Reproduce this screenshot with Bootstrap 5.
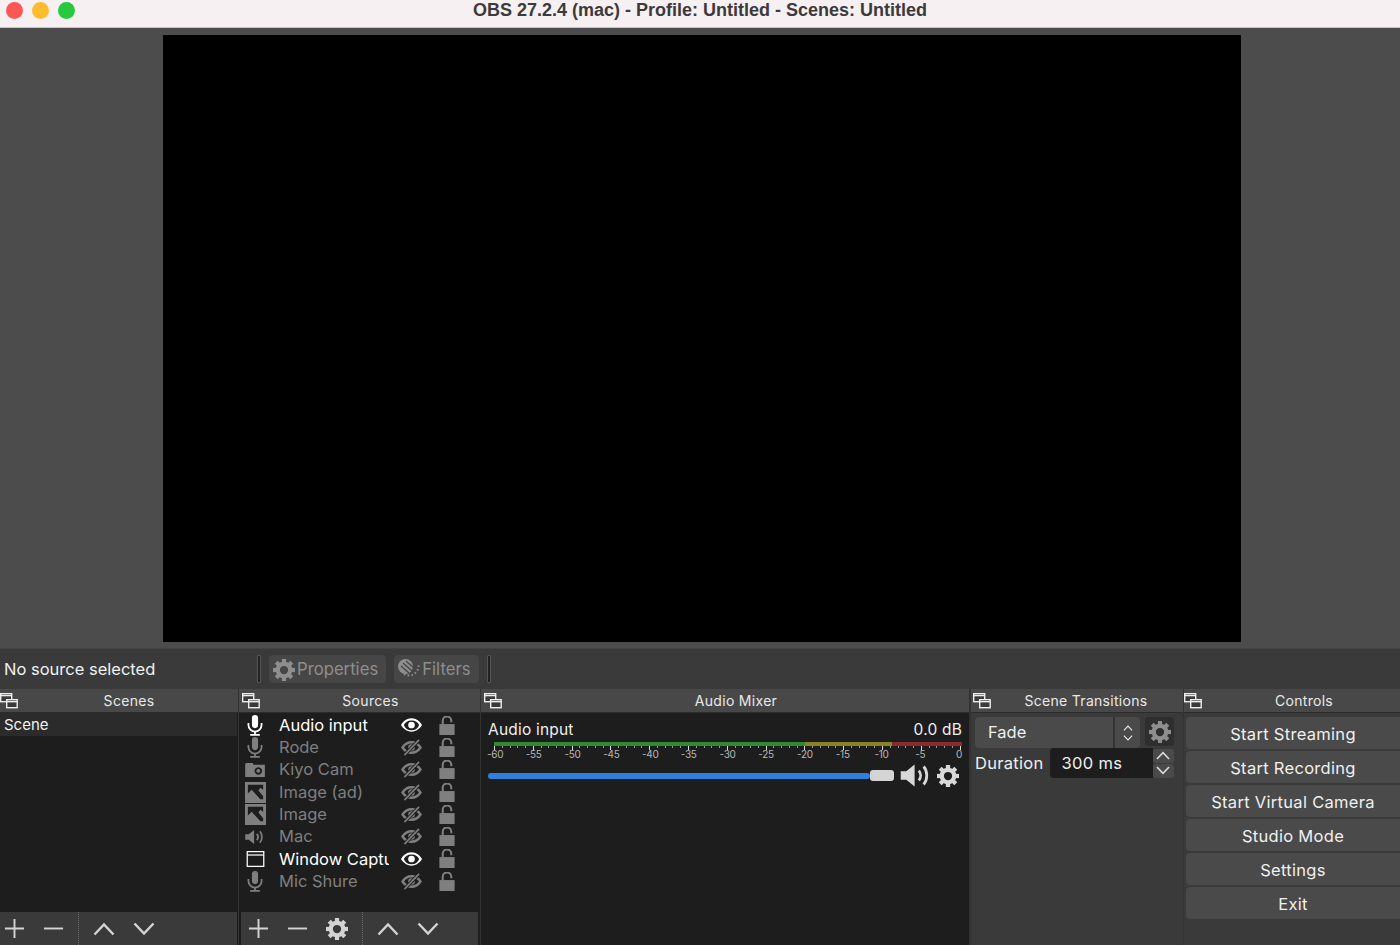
<!DOCTYPE html>
<html lang="en">
<head>
<meta charset="UTF-8">
<title>OBS 27.2.4 (mac)</title>
<link href="https://cdn.jsdelivr.net/npm/bootstrap@5.3.0/dist/css/bootstrap.min.css" rel="stylesheet">
<style>
html, body { height: 945px; overflow: hidden; }
body { background: #3a3a3a; color: #f0f0f0; font-family: Inter, "Liberation Sans", sans-serif; font-size: 16px; width: 1400px; }
svg { display: block; flex: none; }

.titlebar { height: 28px; background: #f6f0f3; border-bottom: 1px solid #c9c5c7; position: relative; }
.titlebar .title { color: #3c3a3b; font-family: "Liberation Sans", sans-serif; font-size: 18px; font-weight: 700; line-height: 20px; }
.light { width: 17px; height: 17px; border-radius: 50%; }
.light-red { background: #fc5753; }
.light-yellow { background: #fdbc2e; }
.light-green { background: #28c83f; }
.lights { left: 6px; top: 2px; gap: 9px; position: absolute; }
.preview { height: 620px; background: #4c4c4c; padding: 7px 159px 6px 163px; }
.preview div { height: 100%; background: #000; }

.context { height: 41px; background: #3a3a3a; padding-left: 4px; border-top: 1px solid #434343; }
.context .label { width: 253px; font-size: 16.5px; }
.sep { width: 4px; height: 28px; background: #222; border: 1px solid #555; border-radius: 1px; }
.ctx-btn { height: 28px; background: #464646; border-radius: 4px; color: #8e8e8e; font-size: 16.7px; padding: 1px 8px 0 4px; gap: 2px; }

.docks { height: 256px; gap: 1px; background: #333; }
.dock { display: flex; flex-direction: column; background: #3a3a3a; }
.dock-scenes { width: 238px; background: #1d1d1d; }
.dock-sources { width: 241px; background: #1d1d1d; }
.dock-mixer { width: 488px; background: #1d1d1d; }
.dock-trans { width: 212px; margin-left: 1px; }
.dock-controls { flex: 1; }
.dock-title { height: 24px; background: #484848; border-bottom: 1px solid #2b2b2b; position: relative; font-size: 14px; letter-spacing: .3px; color: #e8e8e8; text-align: center; line-height: 24px; padding-left: 20px; flex: none; }
.dock-title svg { position: absolute; left: 0; top: 2px; }
.dock-sources .dock-title, .dock-mixer .dock-title { padding-left: 22px; }
.dock-controls .dock-title { padding-left: 24px; }
.dock-trans .dock-title { padding-left: 18px; }
.dock-sources .dock-title svg, .dock-mixer .dock-title svg { left: 3px; }
.dock-trans .dock-title svg { left: 2px; }
.dock-body { flex: 1; background: #1d1d1d; min-height: 0; }
.toolbar { height: 33px; background: #3a3a3a; flex: none; color: #d4d4d4; }
.dock-scenes .toolbar { padding-left: 4px; margin-right: 1px; }
.dock-sources .toolbar { padding-left: 7px; margin: 0 2px; }
.tool-gap { margin-right: 18px; }
.toolbar .dots { height: 33px; border-left: 1px dotted #6a6a6a; margin: 0 14px; }
.scene-row { height: 23px; background: #2b2b2b; padding-left: 4px; margin-right: 1px; line-height: 23px; font-size: 15px; }

.src-list { padding-top: 1px; }
.src-row { height: 22.3px; padding-left: 5px; font-size: 16.5px; color: #7f7f7f; }
.src-row.on { color: #fff; }
.src-ico { width: 22px; margin-right: 13px; }
.src-name { width: 110px; overflow: hidden; white-space: nowrap; }
.src-eye { margin-left: 12px; margin-right: 17px; }
.src-lock { color: #7f7f7f; }

.mixer { padding: 6px 7px; }
.mixer-head { font-size: 15.5px; line-height: 22px; letter-spacing: .2px; }
.meter { height: 4px; margin-left: 6px; margin-top: 1px; background: linear-gradient(90deg, #2f8a2f 0 66.5%, #8b8226 66.5% 85%, #8a2a2a 85%); }
.ticks { height: 4px; margin-left: 6px; background: repeating-linear-gradient(90deg, #ddd 0 1px, transparent 1px 38.8px), repeating-linear-gradient(90deg, #999 0 1px, transparent 1px 7.76px) 0 0 / 100% 2px no-repeat; }
.scale { margin: -1px -4px 0 -1px; font-size: 10px; color: #b8b8b8; line-height: 11px; letter-spacing: -.3px; }
.scale span { width: 14px; text-align: center; }
.slider-row { margin-top: 3px; }
.track { width: 382px; height: 6px; background: #2f80dc; border-radius: 3px; }
.thumb { width: 24px; height: 11px; background: #d4d4d4; border-radius: 3px; margin-right: 6px; }
.mixer-spk { color: #d8d8d8; margin-right: 5px; }
.mixer-gear { color: #d8d8d8; }

.trans-select { width: 165px; height: 31px; background: #4a4a4a; border-radius: 4px; padding-left: 13px; font-size: 16.5px; }
.trans-select .arrows { margin-left: auto; width: 27px; height: 100%; border-left: 2px solid #333; }
.icon-btn { width: 29px; height: 29px; background: #2e2e2e; border-radius: 4px; color: #8e8e8e; margin-left: 5px; }
.duration { font-size: 16.5px; letter-spacing: .3px; }
.dur-input { width: 103px; height: 30px; background: #1d1d1d; border-radius: 4px 0 0 4px; padding-left: 12px; margin-left: 6px; }
.spin { width: 21px; height: 14px; background: #4a4a4a; color: #ddd; border-radius: 3px; }
.spin-stack { gap: 1px; }

.control-list { gap: 2px; padding-top: 4px; }
.control-btn { height: 32px; width: 214px; background: #4a4a4a; color: #f0f0f0; border: 0; border-radius: 4px 0 0 4px; padding: 2px 0 0; font-size: 16.5px; letter-spacing: .3px; }
.control-btn:hover { background: #4a4a4a; color: #f0f0f0; }
</style>
</head>
<body>

<svg width="0" height="0" class="position-absolute">
  <symbol id="i-dock" viewBox="0 0 18 18"><g fill="#3a3a3a" stroke="#eee" stroke-width="1.4"><rect x=".7" y="2.7" width="11" height="8"/><path d="M1 4.600h10.500"/><rect x="6.700" y="8.700" width="10.500" height="8"/><path d="M7 10.700h10"/></g></symbol>
  <symbol id="i-mic" viewBox="0 0 18 24"><rect x="5.500" y="0" width="7" height="15" rx="3.500" fill="currentColor"/><path d="M1.500 9v2.500a7.500 7.500 0 0 0 15 0V9" fill="none" stroke="currentColor" stroke-width="2"/><path d="M9 19v3M3.500 22.800h11" stroke="currentColor" stroke-width="2"/></symbol>
  <symbol id="i-cam" viewBox="0 0 22 16"><path fill="currentColor" fill-rule="evenodd" d="M1 1h7l1 2h12v13H0V2zM14 5.500a4 4 0 1 0 .01 0zM14 7.500a2 2 0 1 1-.01 0z"/></symbol>
  <symbol id="i-img" viewBox="0 0 22 22"><path fill="currentColor" fill-rule="evenodd" d="M0 0h22v22H0zM3 3v9l4-4 9 10h3v-3l-5-6 2-3 3 2V3z"/></symbol>
  <symbol id="i-spk" viewBox="0 0 22 18"><path fill="currentColor" d="M0 6h4l6-5v16l-6-5H0z"/><path d="M13 5.500c1.700 2 1.700 5 0 7M16.500 2.500c3 3.500 3 9.500 0 13" fill="none" stroke="currentColor" stroke-width="2"/></symbol>
  <symbol id="i-win" viewBox="0 0 20 18"><rect x=".7" y=".7" width="18.600" height="16.600" fill="none" stroke="currentColor" stroke-width="1.400"/><path d="M1 4.500h18" stroke="currentColor" stroke-width="1.400"/></symbol>
  <symbol id="i-eye" viewBox="0 0 22 14"><path fill="currentColor" fill-rule="evenodd" d="M11 0c5 0 9 3.500 11 7-2 3.500-6 7-11 7S2 10.500 0 7c2-3.500 6-7 11-7zM11 2.200a8.500 8.500 0 0 0-8 4.800 8.500 8.500 0 0 0 16 0 8.500 8.500 0 0 0-8-4.800zM11 3.500a3.500 3.500 0 1 1 0 7 3.500 3.500 0 0 1 0-7z"/></symbol>
  <symbol id="i-eyeoff" viewBox="0 0 22 18"><path d="M1.500 9c2-3 5.300-5.500 9.500-5.500S18.500 6 20.500 9c-2 3-5.300 5.500-9.500 5.500S3.500 12 1.500 9z" fill="none" stroke="currentColor" stroke-width="2.600"/><circle cx="11" cy="9" r="3.500" fill="currentColor"/><path d="M3.500 17 19 1" stroke="#1d1d1d" stroke-width="3.600"/><path d="M3.500 17 19 1" stroke="currentColor" stroke-width="1.800"/></symbol>
  <symbol id="i-lock" viewBox="0 0 16 20"><rect x="0" y="8.500" width="16" height="11.500" fill="currentColor"/><path d="M3.500 9V5a4.500 4.500 0 0 1 9 0V6.500" fill="none" stroke="currentColor" stroke-width="2.200"/></symbol>
  <symbol id="i-plus" viewBox="0 0 22 22"><path d="M11 1v20M1 11h20" stroke="currentColor" stroke-width="2"/></symbol>
  <symbol id="i-minus" viewBox="0 0 22 22"><path d="M1 11h20" stroke="currentColor" stroke-width="2"/></symbol>
  <symbol id="i-up" viewBox="0 0 22 14"><path d="M1.500 12.500 11 2.500l9.500 10" fill="none" stroke="currentColor" stroke-width="2.400"/></symbol>
  <symbol id="i-down" viewBox="0 0 22 14"><path d="M1.500 1.500 11 11.500l9.500-10" fill="none" stroke="currentColor" stroke-width="2.400"/></symbol>
  <symbol id="i-gear" viewBox="0 0 24 24"><circle cx="12" cy="12" r="6.800" fill="none" stroke="currentColor" stroke-width="4.600"/><g fill="currentColor"><rect x="9.700" y="0" width="4.600" height="5"/><rect x="9.700" y="19" width="4.600" height="5"/><rect x="0" y="9.700" width="5" height="4.600"/><rect x="19" y="9.700" width="5" height="4.600"/><rect x="9.700" y="0" width="4.600" height="5" transform="rotate(45 12 12)"/><rect x="9.700" y="0" width="4.600" height="5" transform="rotate(135 12 12)"/><rect x="9.700" y="0" width="4.600" height="5" transform="rotate(225 12 12)"/><rect x="9.700" y="0" width="4.600" height="5" transform="rotate(315 12 12)"/></g></symbol>
  <symbol id="i-filter" viewBox="0 0 22 22"><circle cx="7.500" cy="7.500" r="7.500" fill="currentColor"/><path d="M8 2l8 7M5 4l9 8M3 7l8 7" stroke="#464646" stroke-width="1.300"/><path d="M6 15a9.500 9.500 0 0 0 14.500-9" fill="none" stroke="currentColor" stroke-width="2" stroke-dasharray="1.600 2.200"/></symbol>
</svg>

<div class="titlebar d-flex justify-content-center">
  <div class="lights d-flex">
    <div class="light light-red"></div>
    <div class="light light-yellow"></div>
    <div class="light light-green"></div>
  </div>
  <div class="title">OBS 27.2.4 (mac) - Profile: Untitled - Scenes: Untitled</div>
</div>

<div class="preview"><div></div></div>

<div class="context d-flex align-items-center">
  <div class="label">No source selected</div>
  <div class="sep me-2"></div>
  <div class="ctx-btn d-flex align-items-center me-2"><svg width="22" height="22"><use href="#i-gear"/></svg>Properties</div>
  <div class="ctx-btn d-flex align-items-center"><svg width="22" height="22"><use href="#i-filter"/></svg>Filters</div>
  <div class="sep ms-2"></div>
</div>

<div class="docks d-flex">
  <section class="dock dock-scenes">
    <div class="dock-title"><svg width="18" height="18"><use href="#i-dock"/></svg>Scenes</div>
    <div class="dock-body"><div class="scene-row">Scene</div></div>
    <div class="toolbar d-flex align-items-center">
      <svg width="21" height="21" class="tool-gap"><use href="#i-plus"/></svg>
      <svg width="21" height="21"><use href="#i-minus"/></svg>
      <div class="dots"></div>
      <svg width="22" height="14" class="tool-gap"><use href="#i-up"/></svg>
      <svg width="22" height="14"><use href="#i-down"/></svg>
    </div>
  </section>

  <section class="dock dock-sources">
    <div class="dock-title"><svg width="18" height="18"><use href="#i-dock"/></svg>Sources</div>
    <div class="dock-body src-list">
      <div class="src-row on d-flex align-items-center"><div class="src-ico d-flex justify-content-center"><svg width="16" height="21"><use href="#i-mic"/></svg></div><div class="src-name">Audio input</div><svg class="src-eye" width="21" height="14"><use href="#i-eye"/></svg><svg class="src-lock" width="16" height="19"><use href="#i-lock"/></svg></div>
      <div class="src-row d-flex align-items-center"><div class="src-ico d-flex justify-content-center"><svg width="16" height="21"><use href="#i-mic"/></svg></div><div class="src-name">Rode</div><svg class="src-eye" width="21" height="17"><use href="#i-eyeoff"/></svg><svg class="src-lock" width="16" height="19"><use href="#i-lock"/></svg></div>
      <div class="src-row d-flex align-items-center"><div class="src-ico d-flex justify-content-center"><svg width="21" height="15"><use href="#i-cam"/></svg></div><div class="src-name">Kiyo Cam</div><svg class="src-eye" width="21" height="17"><use href="#i-eyeoff"/></svg><svg class="src-lock" width="16" height="19"><use href="#i-lock"/></svg></div>
      <div class="src-row d-flex align-items-center"><div class="src-ico d-flex justify-content-center"><svg width="21" height="21"><use href="#i-img"/></svg></div><div class="src-name">Image (ad)</div><svg class="src-eye" width="21" height="17"><use href="#i-eyeoff"/></svg><svg class="src-lock" width="16" height="19"><use href="#i-lock"/></svg></div>
      <div class="src-row d-flex align-items-center"><div class="src-ico d-flex justify-content-center"><svg width="21" height="21"><use href="#i-img"/></svg></div><div class="src-name">Image</div><svg class="src-eye" width="21" height="17"><use href="#i-eyeoff"/></svg><svg class="src-lock" width="16" height="19"><use href="#i-lock"/></svg></div>
      <div class="src-row d-flex align-items-center"><div class="src-ico d-flex justify-content-center"><svg width="20" height="16"><use href="#i-spk"/></svg></div><div class="src-name">Mac</div><svg class="src-eye" width="21" height="17"><use href="#i-eyeoff"/></svg><svg class="src-lock" width="16" height="19"><use href="#i-lock"/></svg></div>
      <div class="src-row on d-flex align-items-center"><div class="src-ico d-flex justify-content-center"><svg width="19" height="16"><use href="#i-win"/></svg></div><div class="src-name">Window Capture</div><svg class="src-eye" width="21" height="14"><use href="#i-eye"/></svg><svg class="src-lock" width="16" height="19"><use href="#i-lock"/></svg></div>
      <div class="src-row d-flex align-items-center"><div class="src-ico d-flex justify-content-center"><svg width="16" height="21"><use href="#i-mic"/></svg></div><div class="src-name">Mic Shure</div><svg class="src-eye" width="21" height="17"><use href="#i-eyeoff"/></svg><svg class="src-lock" width="16" height="19"><use href="#i-lock"/></svg></div>
    </div>
    <div class="toolbar d-flex align-items-center">
      <svg width="21" height="21" class="tool-gap"><use href="#i-plus"/></svg>
      <svg width="21" height="21" class="tool-gap"><use href="#i-minus"/></svg>
      <svg width="22" height="22"><use href="#i-gear"/></svg>
      <div class="dots"></div>
      <svg width="22" height="14" class="tool-gap"><use href="#i-up"/></svg>
      <svg width="22" height="14"><use href="#i-down"/></svg>
    </div>
  </section>

  <section class="dock dock-mixer">
    <div class="dock-title"><svg width="18" height="18"><use href="#i-dock"/></svg>Audio Mixer</div>
    <div class="mixer">
      <div class="mixer-head d-flex justify-content-between"><span>Audio input</span><span>0.0 dB</span></div>
      <div class="meter"></div>
      <div class="ticks"></div>
      <div class="scale d-flex justify-content-between">
        <span>-60</span><span>-55</span><span>-50</span><span>-45</span><span>-40</span><span>-35</span><span>-30</span><span>-25</span><span>-20</span><span>-15</span><span>-10</span><span>-5</span><span>0</span>
      </div>
      <div class="slider-row d-flex align-items-center">
        <div class="track"></div>
        <div class="thumb"></div>
        <svg width="32" height="25" class="mixer-spk"><use href="#i-spk"/></svg>
        <svg width="22" height="22" class="mixer-gear"><use href="#i-gear"/></svg>
      </div>
    </div>
  </section>

  <section class="dock dock-trans">
    <div class="dock-title"><svg width="18" height="18"><use href="#i-dock"/></svg>Scene Transitions</div>
    <div class="p-1">
      <div class="d-flex align-items-start">
        <div class="trans-select d-flex align-items-center">Fade
          <div class="arrows d-flex flex-column align-items-center justify-content-center gap-1">
            <svg width="10" height="6"><use href="#i-up"/></svg>
            <svg width="10" height="6"><use href="#i-down"/></svg>
          </div>
        </div>
        <div class="icon-btn d-flex align-items-center justify-content-center"><svg width="22" height="22"><use href="#i-gear"/></svg></div>
      </div>
      <div class="d-flex align-items-center duration">
        <span>Duration</span>
        <div class="dur-input d-flex align-items-center">300 ms</div>
        <div class="d-flex flex-column spin-stack">
          <div class="spin d-flex align-items-center justify-content-center"><svg width="14" height="9"><use href="#i-up"/></svg></div>
          <div class="spin d-flex align-items-center justify-content-center"><svg width="14" height="9"><use href="#i-down"/></svg></div>
        </div>
      </div>
    </div>
  </section>

  <section class="dock dock-controls">
    <div class="dock-title"><svg width="18" height="18"><use href="#i-dock"/></svg>Controls</div>
    <div class="d-flex flex-column align-items-end control-list">
      <button class="btn control-btn">Start Streaming</button>
      <button class="btn control-btn">Start Recording</button>
      <button class="btn control-btn">Start Virtual Camera</button>
      <button class="btn control-btn">Studio Mode</button>
      <button class="btn control-btn">Settings</button>
      <button class="btn control-btn">Exit</button>
    </div>
  </section>
</div>

<script src="https://cdn.jsdelivr.net/npm/bootstrap@5.3.0/dist/js/bootstrap.bundle.min.js"></script>
</body>
</html>
